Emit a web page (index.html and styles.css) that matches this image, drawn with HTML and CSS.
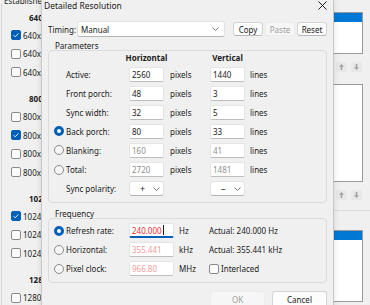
FILE: index.html
```html
<!DOCTYPE html>
<html lang="en">
<head>
  <meta charset="UTF-8"/>
  <title>Detailed Resolution</title>
  <link rel="stylesheet" href="styles.css">
</head>
<body>
  <div class="desktop">
    <!-- window behind the dialog: established timings -->
    <div class="timings">
      <div class="timings-title">Established Timings</div>
      <div class="res-group">
        <div class="res-head">640x480</div>
        <div class="res-row"><span class="check on"></span>640x480 @ 60Hz</div>
        <div class="res-row"><span class="check"></span>640x480 @ 72Hz</div>
        <div class="res-row"><span class="check"></span>640x480 @ 75Hz</div>
      </div>
      <div class="res-group">
        <div class="res-head">800x600</div>
        <div class="res-row"><span class="check"></span>800x600 @ 56Hz</div>
        <div class="res-row"><span class="check on"></span>800x600 @ 60Hz</div>
        <div class="res-row"><span class="check"></span>800x600 @ 72Hz</div>
        <div class="res-row"><span class="check"></span>800x600 @ 75Hz</div>
      </div>
      <div class="res-group">
        <div class="res-head">1024x768</div>
        <div class="res-row"><span class="check on"></span>1024x768 @ 60Hz</div>
        <div class="res-row"><span class="check"></span>1024x768 @ 70Hz</div>
        <div class="res-row"><span class="check"></span>1024x768 @ 75Hz</div>
      </div>
      <div class="res-group">
        <div class="res-head">1280x1024</div>
        <div class="res-row"><span class="check"></span>1280x1024 @ 75Hz</div>
      </div>
    </div>

    <div class="side">
      <div class="list"><div class="sel"></div></div>
      <div class="arrows">
        <span class="arrow-btn"><svg viewBox="0 0 11 10" width="11" height="10"><path d="M5.5 2 L3 4.8 H4.7 V8 H6.3 V4.8 H8 Z" fill="#a3a3a3"/></svg></span>
        <span class="arrow-btn"><svg viewBox="0 0 11 10" width="11" height="10"><path d="M5.5 8 L3 5.2 H4.7 V2 H6.3 V5.2 H8 Z" fill="#a3a3a3"/></svg></span>
      </div>
      <div class="list tall"></div>
      <div class="arrows">
        <span class="arrow-btn"><svg viewBox="0 0 11 10" width="11" height="10"><path d="M5.5 2 L3 4.8 H4.7 V8 H6.3 V4.8 H8 Z" fill="#a3a3a3"/></svg></span>
        <span class="arrow-btn"><svg viewBox="0 0 11 10" width="11" height="10"><path d="M5.5 8 L3 5.2 H4.7 V2 H6.3 V5.2 H8 Z" fill="#a3a3a3"/></svg></span>
      </div>
      <hr class="side-rule"/>
      <div class="list bottom"><div class="sel"></div></div>
    </div>
  </div>

  <div class="dialog">
    <div class="titlebar">
      <span class="title">Detailed Resolution</span>
      <svg class="close" viewBox="0 0 9 9" width="9" height="9"><path d="M0.5 0.5 L8.5 8.5 M8.5 0.5 L0.5 8.5" stroke="#1b1b1b" stroke-width="1"/></svg>
    </div>

    <div class="timing-row">
      <span class="timing-label">Timing:</span>
      <div class="combo wide">
        <span>Manual</span>
        <svg class="chev" viewBox="0 0 7 4" width="7" height="4"><path d="M0.5 0.5 L3.5 3.5 L6.5 0.5" fill="none" stroke="#7a7a7a"/></svg>
      </div>
      <div class="btn-row">
        <button class="btn">Copy</button>
        <button class="btn" disabled>Paste</button>
        <button class="btn">Reset</button>
      </div>
    </div>

    <div class="group-title">Parameters</div>
    <div class="group params">
      <span></span><span></span>
      <div class="col-head">Horizontal</div><span></span>
      <div class="col-head">Vertical</div><span></span>

      <span></span><span>Active:</span>
      <div class="field">2560</div><span class="unit">pixels</span>
      <div class="field">1440</div><span class="unit">lines</span>

      <span></span><span>Front porch:</span>
      <div class="field">48</div><span class="unit">pixels</span>
      <div class="field">3</div><span class="unit">lines</span>

      <span></span><span>Sync width:</span>
      <div class="field">32</div><span class="unit">pixels</span>
      <div class="field">5</div><span class="unit">lines</span>

      <span class="radio on"></span><span>Back porch:</span>
      <div class="field">80</div><span class="unit">pixels</span>
      <div class="field">33</div><span class="unit">lines</span>

      <span class="radio"></span><span>Blanking:</span>
      <div class="field muted">160</div><span class="unit">pixels</span>
      <div class="field muted">41</div><span class="unit">lines</span>

      <span class="radio"></span><span>Total:</span>
      <div class="field muted">2720</div><span class="unit">pixels</span>
      <div class="field muted">1481</div><span class="unit">lines</span>

      <span></span><span>Sync polarity:</span>
      <div class="combo small">
        <span class="sign">+</span>
        <svg class="chev" viewBox="0 0 7 4" width="7" height="4"><path d="M0.5 0.5 L3.5 3.5 L6.5 0.5" fill="none" stroke="#7a7a7a"/></svg>
      </div>
      <span></span>
      <div class="combo small">
        <span class="sign">&ndash;</span>
        <svg class="chev" viewBox="0 0 7 4" width="7" height="4"><path d="M0.5 0.5 L3.5 3.5 L6.5 0.5" fill="none" stroke="#7a7a7a"/></svg>
      </div>
      <span></span>
    </div>

    <div class="group-title freq-title">Frequency</div>
    <div class="group freq">
      <span class="radio on"></span><span>Refresh rate:</span>
      <div class="field focus hot">240.000<span class="caret"></span></div><span class="unit">Hz</span>
      <span>Actual: 240.000 Hz</span>

      <span class="radio"></span><span>Horizontal:</span>
      <div class="field warm">355.441</div><span class="unit">kHz</span>
      <span>Actual: 355.441 kHz</span>

      <span class="radio"></span><span>Pixel clock:</span>
      <div class="field warm">966.80</div><span class="unit">MHz</span>
      <span class="interlaced"><span class="check"></span>Interlaced</span>
    </div>

    <div class="actions">
      <button class="btn big" disabled>OK</button>
      <button class="btn big">Cancel</button>
    </div>
  </div>
</body>
</html>
```

FILE: styles.css
```css
/* ===== Global ===== */
* { margin: 0; padding: 0; box-sizing: border-box; }
body {
  width: 370px;
  height: 305px;
  overflow: hidden;
  position: relative;
  background: #f0f0f0;
  font-family: 'Noto Sans', sans-serif;
  font-size: 8px;
  color: #1b1b1b;
}

/* ===== Window behind ===== */
.desktop { display: flex; justify-content: space-between; height: 305px; }

.timings {
  position: relative;
  width: 41px;
  height: 330px;
  margin: 3px 0 0 1px;
  padding: 6px 0 0 9px;
  border: 1px solid #d6d6d6;
  border-right: none;
  border-radius: 3px 0 0 3px;
  white-space: nowrap;
}
.timings-title {
  position: absolute;
  top: -8px; left: 1px;
  width: 39px;
  overflow: hidden;
  padding: 0 1px;
  line-height: 9px;
  background: #f0f0f0;
}
.res-group { overflow: hidden; }
.res-group + .res-group { margin-top: 9.75px; }
.res-head { height: 16px; line-height: 16px; padding-left: 18px; font-weight: 700; }
.res-row { display: flex; align-items: center; height: 18.5px; }

.check {
  width: 10px; height: 10px;
  margin-right: 2px;
  flex: none;
  border: 1px solid #8a8a8a;
  border-radius: 2px;
  background: #fbfbfb;
}
.check.on {
  border-color: #005fb8;
  background: #005fb8 url("data:image/svg+xml,%3Csvg xmlns='http://www.w3.org/2000/svg' viewBox='0 0 8 8'%3E%3Cpath d='M1.6 4.2 L3.2 5.8 L6.4 2.4' fill='none' stroke='%23fff' stroke-width='0.9'/%3E%3C/svg%3E") center/8px 8px no-repeat;
}

.side {
  width: 50px;
  margin-right: 7px;
  padding-top: 12px;
  display: flex;
  flex-direction: column;
}
.list { height: 42px; background: #fff; border: 1px solid #9a9a9a; }
.list .sel { height: 9px; background: #0078d4; }
.list.tall { height: 98px; margin-top: 12px; }
.list.bottom { height: 72px; margin-top: 19px; }
.arrows { display: flex; justify-content: flex-end; gap: 4px; margin-top: 8px; padding-right: 1px; }
.arrow-btn { width: 11px; height: 10px; background: #e8e8e8; border-radius: 2px; display: flex; }
.side-rule { border: none; border-top: 1px solid #dadada; margin: 10px -10px 0 0; }

/* ===== Dialog ===== */
.dialog {
  position: absolute;
  top: 0; left: 41px;
  width: 293px;
  height: 330px;
  padding: 0 6px;
  background: #f0f0f0;
  border: 1px solid #c8c8c8;
  border-top: none;
  box-shadow: 0 0 6px rgba(0,0,0,0.12);
}
.titlebar {
  height: 21px;
  margin-left: -4px;
  display: flex;
  justify-content: space-between;
  align-items: flex-start;
}
.title { font-size: 8.5px; line-height: 11px; }
.close { margin-top: 1px; }

.timing-row { display: flex; align-items: center; height: 16px; }
.timing-label { width: 29px; }
.combo {
  height: 16px;
  padding: 0 5px 0 3px;
  display: flex;
  align-items: center;
  justify-content: space-between;
  background: #fff;
  border: 1px solid #e2e2e2;
  border-bottom-color: #b4b4b4;
  border-radius: 3px;
}
.combo.wide { width: 148px; }
.combo.small { height: 15px; padding: 0 3px 0 10px; }
.combo .sign { font-size: 9px; }
.btn-row { display: flex; gap: 2px; margin-left: 8px; }
.btn {
  width: 30px; height: 14px;
  font: inherit;
  color: #1b1b1b;
  background: #fdfdfd;
  border: 1px solid #d4d4d4;
  border-bottom-color: #b8b8b8;
  border-radius: 3px;
}
.btn:disabled { color: #a0a0a0; background: #f6f6f6; border-color: #ececec; }
.btn.big { width: 55px; height: 17px; }

/* ===== Group boxes ===== */
.group-title { line-height: 9px; padding-left: 7px; margin-top: 4px; }
.group { border: 1px solid #dcdcdc; border-radius: 4px; display: grid; align-items: center; }
.params {
  grid-template-columns: 12px 63px 35px 46px 35px 1fr;
  grid-template-rows: 13.5px repeat(7, 19.1px);
  padding: 0 0 4px 5px;
}
.col-head { display: flex; justify-content: center; font-weight: 700; white-space: nowrap; }
.freq-title { margin-top: 6px; }
.freq {
  grid-template-columns: 12px 63px 45px 35px 1fr;
  grid-template-rows: repeat(3, 19px);
  padding: 2px 0 4px 5px;
}

.field {
  height: 15px;
  padding-left: 2px;
  display: flex;
  align-items: center;
  background: #fff;
  border: 1px solid #e4e4e4;
  border-bottom-color: #bdbdbd;
  border-radius: 2px;
}
.field.muted { color: #8f8f8f; }
.field.hot { color: #ea2d2d; }
.field.warm { color: #f29b9b; }
.field.focus { border-bottom: 2px solid #005fb8; }
.caret { width: 1px; height: 10px; margin-left: 1px; background: #1b1b1b; }
.unit { padding-left: 6px; }
.freq .unit { padding-left: 5px; }
.params .field + .unit + .field + .unit { padding-left: 5px; }

.radio {
  width: 10px; height: 10px;
  border: 1px solid #8a8a8a;
  border-radius: 50%;
  background: #f7f7f7;
}
.radio.on { border: 3px solid #005fb8; background: #fff; }
.interlaced { display: flex; align-items: center; }

.actions { display: flex; justify-content: flex-end; gap: 7px; margin-top: 8px; }
```
